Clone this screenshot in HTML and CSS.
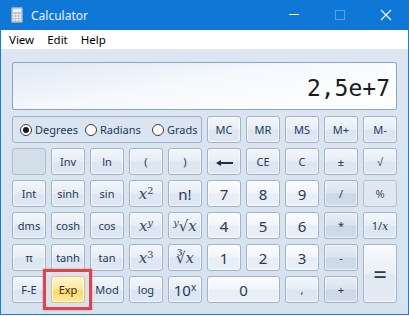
FILE: index.html
```html
<!DOCTYPE html>
<html lang="en">
<head>
    <meta charset="UTF-8">
    <title>Calculator</title>
    <link rel="stylesheet" href="styles.css">
</head>
<body>
    <div class="window">
        <div class="titlebar">
            <svg class="app-icon" width="12" height="16" viewBox="0 0 12 16">
                <rect x="0.5" y="0.5" width="11" height="15" rx="1" fill="#b9c7d6" stroke="#8fa3b8"/>
                <rect x="2" y="2" width="8" height="3" fill="#eef3f8"/>
                <g fill="#eef3f8">
                    <rect x="2" y="7" width="2" height="1.5"/><rect x="5" y="7" width="2" height="1.5"/><rect x="8" y="7" width="2" height="1.5"/>
                    <rect x="2" y="9.5" width="2" height="1.5"/><rect x="5" y="9.5" width="2" height="1.5"/><rect x="8" y="9.5" width="2" height="1.5"/>
                    <rect x="2" y="12" width="2" height="1.5"/><rect x="5" y="12" width="2" height="1.5"/><rect x="8" y="12" width="2" height="1.5"/>
                </g>
            </svg>
            <span class="title">Calculator</span>
            <div class="controls">
                <svg class="ctl" width="46" height="30" viewBox="0 0 46 30"><line x1="18" y1="14.5" x2="28" y2="14.5" stroke="#fff" stroke-width="1"/></svg>
                <svg class="ctl" width="46" height="30" viewBox="0 0 46 30"><rect x="18.5" y="10.5" width="9" height="9" fill="none" stroke="#5fa3e6" stroke-width="1"/></svg>
                <svg class="ctl" width="46" height="30" viewBox="0 0 46 30"><path d="M18 10 L28 20 M28 10 L18 20" stroke="#fff" stroke-width="1.1"/></svg>
            </div>
        </div>

        <div class="menubar">
            <span class="menu-item">View</span>
            <span class="menu-item">Edit</span>
            <span class="menu-item">Help</span>
        </div>

        <div class="main">
            <div class="display">2,5e+7</div>

            <div class="keypad">
                <div class="angle-group">
                    <label class="radio"><span class="dot checked"></span>Degrees</label>
                    <label class="radio"><span class="dot"></span>Radians</label>
                    <label class="radio"><span class="dot"></span>Grads</label>
                </div>
                <button class="key">MC</button>
                <button class="key">MR</button>
                <button class="key">MS</button>
                <button class="key">M+</button>
                <button class="key">M-</button>

                <button class="key disabled"></button>
                <button class="key">Inv</button>
                <button class="key">ln</button>
                <button class="key">(</button>
                <button class="key">)</button>
                <button class="key">
                    <svg class="back" width="17" height="6" viewBox="0 0 17 6"><path d="M0 3 L5 0 L5 2 L17 2 L17 4 L5 4 L5 6 Z" fill="#1e2f45"/></svg>
                </button>
                <button class="key">CE</button>
                <button class="key">C</button>
                <button class="key">±</button>
                <button class="key">√</button>

                <button class="key">Int</button>
                <button class="key">sinh</button>
                <button class="key">sin</button>
                <button class="key math"><i>x</i><sup>2</sup></button>
                <button class="key big">n!</button>
                <button class="key digit">7</button>
                <button class="key digit">8</button>
                <button class="key digit">9</button>
                <button class="key op">/</button>
                <button class="key flat">%</button>

                <button class="key">dms</button>
                <button class="key">cosh</button>
                <button class="key">cos</button>
                <button class="key math"><i>x</i><sup><i>y</i></sup></button>
                <button class="key math"><sup><i>y</i></sup>√<i>x</i></button>
                <button class="key digit">4</button>
                <button class="key digit">5</button>
                <button class="key digit">6</button>
                <button class="key op">*</button>
                <button class="key">1/<i class="serif">x</i></button>

                <button class="key">π</button>
                <button class="key">tanh</button>
                <button class="key">tan</button>
                <button class="key math"><i>x</i><sup>3</sup></button>
                <button class="key math">∛<i>x</i></button>
                <button class="key digit">1</button>
                <button class="key digit">2</button>
                <button class="key digit">3</button>
                <button class="key op">-</button>
                <button class="key equals">=</button>

                <button class="key">F-E</button>
                <button class="key hover marked">Exp</button>
                <button class="key">Mod</button>
                <button class="key">log</button>
                <button class="key big">10<sup class="sup-x">x</sup></button>
                <button class="key digit zero">0</button>
                <button class="key">,</button>
                <button class="key op">+</button>
            </div>
        </div>
    </div>
</body>
</html>
```

FILE: styles.css
```css
body {
    margin: 0;
    font-family: "Noto Sans", sans-serif;
    background: #fff;
}
.window {
    width: 409px;
    height: 315px;
    box-sizing: border-box;
    border: 1px solid #1a7dd6;
    border-top: 0;
    background: linear-gradient(#dde7f3, #d6e2ef);
    display: flex;
    flex-direction: column;
}
.titlebar {
    height: 30px;
    background: #0f78d7;
    display: flex;
    align-items: center;
    color: #fff;
    margin: 0 -1px;
}
.app-icon {
    margin-left: 11px;
    margin-right: 8px;
}
.title {
    font-size: 12px;
    color: #eaf3fc;
}
.controls {
    margin-left: auto;
    display: flex;
}
.ctl {
    display: block;
}
.menubar {
    height: 19px;
    background: #fff;
    display: flex;
    align-items: center;
    padding-left: 1px;
    font-size: 11.5px;
}
.menu-item {
    padding: 0 6px 0 7px;
    color: #000;
}
.main {
    padding: 13px 0 0 11px;
}
.display {
    width: 385px;
    height: 48px;
    box-sizing: border-box;
    border: 1px solid #8ea3bc;
    border-radius: 2px;
    background: linear-gradient(170deg, #dfe8f4, #f6f9fd 45%, #fff);
    margin-bottom: 6px;
    font-family: "DejaVu Sans Mono", monospace;
    font-size: 23px;
    color: #1b1b1b;
    text-align: right;
    padding: 12px 6px 0 0;
}
.keypad {
    display: grid;
    grid-template-columns: repeat(10, 34px);
    grid-auto-rows: 27px;
    gap: 5px;
}
.angle-group {
    grid-column: span 5;
    box-sizing: border-box;
    border: 1px solid #9fb1c6;
    border-radius: 3px;
    background: #dae5f1;
    display: grid;
    grid-template-columns: 65px 67px auto;
    align-items: center;
    padding-left: 7px;
    font-size: 11px;
    color: #1e395b;
}
.radio {
    display: flex;
    align-items: center;
    gap: 3px;
}
.dot {
    width: 12px;
    height: 12px;
    box-sizing: border-box;
    border: 1px solid #3a3a3a;
    border-radius: 50%;
    background: #fff;
    position: relative;
    flex: none;
}
.dot.checked::after {
    content: "";
    position: absolute;
    left: 2px;
    top: 2px;
    width: 6px;
    height: 6px;
    border-radius: 50%;
    background: #1a1a1a;
}
.key {
    box-sizing: border-box;
    border: 1px solid #a2b3c7;
    border-radius: 3px;
    background: linear-gradient(#f2f6fa, #e7eef6 48%, #dce5f0 52%, #e0e9f3);
    box-shadow: inset 0 0 0 1px rgba(255, 255, 255, 0.55);
    font-family: "Noto Sans", sans-serif;
    font-size: 11px;
    color: #1e395b;
    padding: 0;
    text-align: center;
    white-space: nowrap;
    position: relative;
}
.back {
    vertical-align: middle;
}
.key i {
    font-style: italic;
}
.key sup {
    font-size: 0.65em;
    line-height: 0;
    vertical-align: 0.55em;
}
.key.math {
    font-family: "DejaVu Serif", serif;
    font-size: 15px;
    color: #34485f;
}
.serif {
    font-family: "DejaVu Serif", serif;
}
.key.big {
    font-size: 15px;
}
.key .sup-x {
    font-size: 10px;
}
.key.digit {
    font-size: 15px;
    color: #2c3a4b;
    background: linear-gradient(#fbfcfe, #f1f5fa 48%, #e6edf5 52%, #ebf1f7);
}
.key.op {
    background: linear-gradient(#e6edf5, #dce5ef 48%, #ccd7e4 52%, #d3dde9);
}
.key.flat {
    background: #e1e8f1;
    border-color: #b4c2d2;
    box-shadow: none;
    color: #3b4f66;
}
.key.disabled {
    background: #d5dfea;
    border-color: #aebdcf;
    box-shadow: none;
}
.key.equals {
    grid-row: span 2;
    font-size: 24px;
    color: #2c3a4b;
    background: linear-gradient(#f7f9fc, #eaf0f6 48%, #dfe7f1 52%, #e4ebf4);
}
.key.zero {
    grid-column: span 2;
}
.key.hover {
    background: linear-gradient(#fef6d5, #fde9a4 45%, #fbd96c 55%, #fde99c);
    border-color: #e4c36a;
    box-shadow: inset 0 0 0 1px rgba(255, 250, 225, 0.8);
    color: #3b2e12;
}
.key.marked::after {
    content: "";
    position: absolute;
    left: -9px;
    top: -8px;
    right: -8px;
    bottom: -8px;
    border: 3px solid #e0444b;
    box-shadow: 0 0 2px rgba(120, 40, 40, 0.4);
    z-index: 2;
}
```
